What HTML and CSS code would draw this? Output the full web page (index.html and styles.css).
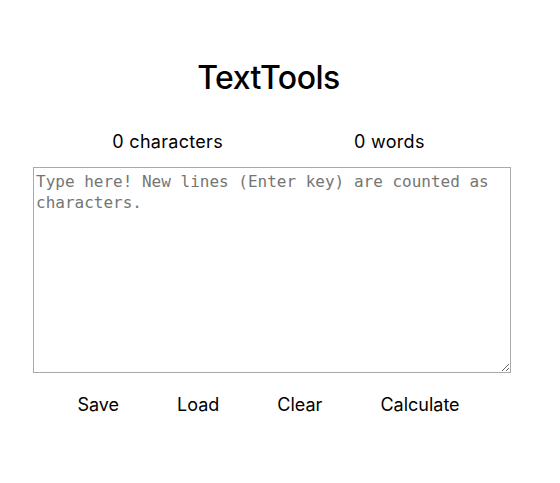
FILE: index.html
```html
<!DOCTYPE html>
<html>
<head>
<meta charset="utf-8">
<link rel="stylesheet" href="styles.css">
</head>
<body>
<main class="app">
  <h1 class="title">TextTools</h1>
  <div class="counts">
    <span class="count">0 characters</span>
    <span class="count">0 words</span>
  </div>
  <textarea class="editor" placeholder="Type here! New lines (Enter key) are counted as characters."></textarea>
  <div class="actions">
    <button class="action">Save</button>
    <button class="action">Load</button>
    <button class="action">Clear</button>
    <button class="action">Calculate</button>
  </div>
</main>
</body>
</html>
```
FILE: styles.css
```css
html, body {
  margin: 0;
  background: #fff;
}
.app {
  width: 537px;
  display: flex;
  flex-direction: column;
  align-items: center;
  font-family: Inter, "Open Sans", sans-serif;
  color: #000;
}
.title {
  margin: 58px 0 0;
  font-size: 32px;
  font-weight: 500;
  line-height: 40px;
  letter-spacing: -0.5px;
}
.counts {
  display: flex;
  gap: 131px;
  margin-top: 32px;
  font-size: 18px;
  line-height: 24px;
  letter-spacing: 0.3px;
}
.editor {
  align-self: flex-start;
  margin: 13px 0 0 33px;
  width: 478px;
  height: 206px;
  box-sizing: border-box;
  border: 1px solid #a9a9a9;
  padding: 3px 2px 2px;
  font-family: "DejaVu Sans Mono", monospace;
  font-size: 16px;
  line-height: 21px;
  color: #000;
}
.editor::placeholder {
  color: #757575;
}
.actions {
  display: flex;
  gap: 58px;
  margin-top: 20px;
}
.action {
  border: none;
  background: none;
  padding: 0;
  font-family: inherit;
  font-size: 18px;
  line-height: 24px;
  color: #000;
  cursor: pointer;
}
```
